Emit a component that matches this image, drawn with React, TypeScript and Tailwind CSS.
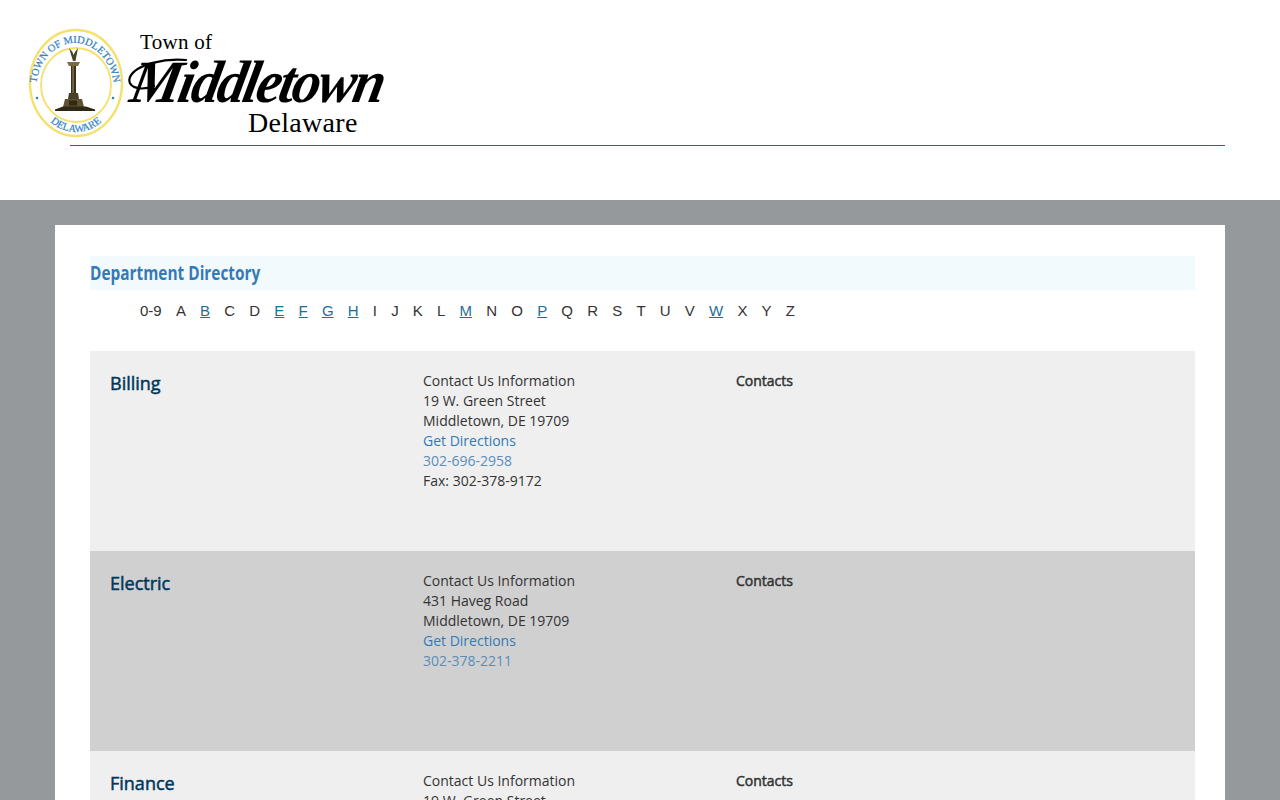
const letters = [
  { label: '0-9' }, { label: 'A' }, { label: 'B', on: true }, { label: 'C' }, { label: 'D' },
  { label: 'E', on: true }, { label: 'F', on: true }, { label: 'G', on: true }, { label: 'H', on: true },
  { label: 'I' }, { label: 'J' }, { label: 'K' }, { label: 'L' }, { label: 'M', on: true },
  { label: 'N' }, { label: 'O' }, { label: 'P', on: true }, { label: 'Q' }, { label: 'R' },
  { label: 'S' }, { label: 'T' }, { label: 'U' }, { label: 'V' }, { label: 'W', on: true },
  { label: 'X' }, { label: 'Y' }, { label: 'Z' },
];

const departments = [
  { name: 'Billing', street: '19 W. Green Street', phone: '302-696-2958', fax: 'Fax: 302-378-9172', bg: 'bg-[#efefef]' },
  { name: 'Electric', street: '431 Haveg Road', phone: '302-378-2211', bg: 'bg-[#d0d0d0]' },
  { name: 'Finance', street: '19 W. Green Street', phone: '302-696-2958', bg: 'bg-[#efefef]' },
];

function Seal() {
  return (
    <svg viewBox="0 0 96 110" className="w-[96px] h-[110px] shrink-0">
      <defs>
        <path id="sealTop" d="M8 62 A39 47 0 0 1 86 62" />
        <path id="sealBottom" d="M8 60 A40 44 0 0 0 88 60" />
      </defs>
      <ellipse cx="48" cy="55" rx="46" ry="53" fill="#fff" stroke="#f5e06a" strokeWidth="2.4" />
      <ellipse cx="48" cy="57" rx="35" ry="37" fill="#fff" stroke="#f5e06a" strokeWidth="1.8" />
      <text fontFamily="'Liberation Serif', serif" fontSize="10.4" fill="#2f7fbf" stroke="#2f7fbf" strokeWidth="0.2">
        <textPath href="#sealTop" startOffset="50%" textAnchor="middle">TOWN OF MIDDLETOWN</textPath>
      </text>
      <text fontFamily="'Liberation Serif', serif" fontSize="10.4" fill="#2f7fbf" stroke="#2f7fbf" strokeWidth="0.2">
        <textPath href="#sealBottom" startOffset="50%" textAnchor="middle">DELAWARE</textPath>
      </text>
      <circle cx="9" cy="70" r="1.3" fill="#2f7fbf" />
      <circle cx="85" cy="70" r="1.3" fill="#2f7fbf" />
      {/* monument */}
      <path d="M45 33 L41 20 L44.5 24 L45.5 27 L47 24 L50 20 L47.5 33 Z" fill="#4a4128" />
      <path d="M39 34 L52 34 L50 38 L41 38 Z" fill="#7a6a42" />
      <rect x="43" y="38" width="5" height="27" fill="#3a3120" />
      <rect x="44.4" y="38" width="1.3" height="27" fill="#8a7a50" />
      <path d="M41 65 L50 65 L51 71 L40 71 Z" fill="#4a3f24" />
      <path d="M37 71 L54 71 L56 79 L35 79 Z" fill="#5e5232" />
      <rect x="41" y="72.5" width="8" height="5" fill="#2f2815" />
      <path d="M27 81.5 L35 78.5 L58 78.5 L67 81.5 L67 83 L27 83 Z" fill="#2f2815" />
    </svg>
  );
}

function Logo() {
  return (
    <div className="absolute left-[28px] top-[28px] flex items-start">
      <Seal />
      <div className="relative w-[262px] h-[110px] text-black font-['Liberation_Serif',serif]">
        <span className="absolute left-[16px] top-[2px] text-[21px] leading-6 tracking-[0.3px] whitespace-nowrap">Town of</span>
        {/* swash of the script M */}
        <svg viewBox="0 0 90 60" className="absolute left-0 top-[28px] w-[90px] h-[60px]" fill="none" stroke="#000" strokeLinecap="round">
          <path d="M30 30 C14 36 2 30 6 21 C12 8 42 2 62 4" strokeWidth="2.2" />
        </svg>
        <span className="absolute left-[8px] top-[22px] text-[60px] leading-[64px] italic font-bold tracking-[-2.6px] whitespace-nowrap origin-left scale-x-[0.94] -skew-x-12">
          Middletown
        </span>
        <span className="absolute left-[124px] top-[79px] text-[28px] leading-8 tracking-[0.3px] whitespace-nowrap">Delaware</span>
      </div>
    </div>
  );
}

function DepartmentRow({ dept }: { dept: (typeof departments)[number] }) {
  return (
    <div className={`grid grid-cols-[313px_313px_1fr] h-[200px] shrink-0 pt-5 pl-5 ${dept.bg}`}>
      <h2 className="text-[18px] leading-6 font-normal text-[#00385a] [-webkit-text-stroke:0.5px_#00385a]">{dept.name}</h2>
      <div className="text-[14px] leading-5 text-[#333]">
        <p>Contact Us Information</p>
        <p>{dept.street}</p>
        <p>Middletown, DE 19709</p>
        <p className="text-[#337ab7]">Get Directions</p>
        <p className="text-[#5b8db8]">{dept.phone}</p>
        {dept.fax && <p>{dept.fax}</p>}
      </div>
      <div className="text-[14px] leading-5 font-normal text-[#333] [-webkit-text-stroke:0.5px_#333]">Contacts</div>
    </div>
  );
}

export default function App() {
  return (
    <div className="h-screen overflow-hidden bg-[#96999b] font-['Open_Sans',sans-serif]">
      <header className="relative h-[200px] bg-white">
        <Logo />
        <div className="pt-[145px] pl-[70px] pr-[55px]">
          <div className="border-t border-[#0f7480]" />
        </div>
      </header>

      <main className="px-[55px] pt-[25px]">
        <div className="bg-white pl-[35px] pr-[30px] pt-[31px]">
          <div className="h-[34px] bg-[#f3fafd] flex items-center">
            <h1 className="text-[20px] font-bold text-[#337ab7] whitespace-nowrap origin-left scale-x-[0.77]">
              Department Directory
            </h1>
          </div>

          <nav className="flex gap-[14.2px] h-[61px] pl-[50px] pt-[12px] text-[15px] leading-[18px] text-[#333] font-['Liberation_Sans',sans-serif]">
            {letters.map((l) => (
              <span key={l.label} className={l.on ? 'underline text-[#1f6d99]' : ''}>
                {l.label}
              </span>
            ))}
          </nav>

          <div className="flex flex-col">
            {departments.map((d) => (
              <DepartmentRow key={d.name} dept={d} />
            ))}
          </div>
        </div>
      </main>
    </div>
  );
}
